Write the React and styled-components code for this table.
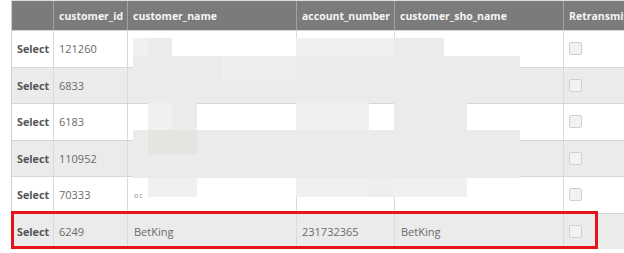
import React from "react";
import styled, { createGlobalStyle, css } from "styled-components";

const Global = createGlobalStyle`
  html, body { margin: 0; padding: 0; background: #fff; overflow: hidden; }
  body { font-family: "Open Sans", "Liberation Sans", sans-serif; }
`;

const Page = styled.div`
  position: relative;
  width: 624px;
  height: 253px;
  overflow: hidden;
`;

const Grid = styled.div`
  margin-left: 11px;
  width: 700px;
  border-top: 1px solid #dcdcdc;
  border-left: 1px solid #cfcfcf;
`;

const COLS = "42px 74px 169px 98px 169px 120px";

const HeadRow = styled.div`
  display: grid;
  grid-template-columns: ${COLS};
  height: 29px;
  background: #7b7b7b;
`;

const HeadCell = styled.div`
  box-sizing: border-box;
  border-right: 1px solid #a3a3a3;
  padding-left: 5px;
  display: flex;
  align-items: center;
  color: #f4f4f4;
  font-weight: 700;
  font-size: 10.5px;
  white-space: nowrap;
  overflow: hidden;
`;

const Row = styled.div`
  display: grid;
  grid-template-columns: ${COLS};
  height: 36.5px;
  box-sizing: border-box;
  border-top: 1px solid #d6d6d6;
  background: ${(p) => (p.$alt ? "#ebebeb" : "#ffffff")};
`;

const Cell = styled.div`
  box-sizing: border-box;
  border-right: 1px solid #dadada;
  padding-left: ${(p) => (p.$pad ? p.$pad : 5)}px;
  display: flex;
  align-items: center;
  color: #6a6a6a;
  font-size: 11px;
  white-space: nowrap;
  overflow: hidden;
  ${(p) =>
    p.$select &&
    css`
      color: #555;
      font-weight: 700;
      font-size: 10.8px;
    `}
`;

const Tiny = styled.span`
  font-size: 7px;
  color: #7f8c99;
  letter-spacing: 1px;
  margin-top: 2px;
`;

const Check = styled.span`
  width: 11px;
  height: 11px;
  border: 1px solid #d0d0d0;
  border-radius: 2px;
  background: #f2f2f2;
`;

const Mosaic = styled.div`
  position: absolute;
  inset: 0;
  pointer-events: none;
`;

const Block = styled.div`
  position: absolute;
  ${(p) =>
    p.$kind === "speckle"
      ? css`
          background-color: #f0f0f0;
          background-image: repeating-conic-gradient(#ececec 0 25%, #f4f4f4 0 50%);
          background-size: 2px 2px;
        `
      : p.$kind === "beige"
      ? css`
          background: #e6e4e1;
        `
      : p.$kind === "light"
      ? css`
          background: #eeeeee;
        `
      : css`
          background: #ebebeb;
        `}
`;

const Highlight = styled.div`
  position: absolute;
  left: 11px;
  top: 211px;
  width: 587px;
  height: 38px;
  box-sizing: border-box;
  border: 3px solid #e4141b;
  pointer-events: none;
`;

const rows = [
  { id: "121260" },
  { id: "6833" },
  { id: "6183" },
  { id: "110952" },
  { id: "70333", tiny: "oc" },
  { id: "6249", name: "BetKing", acc: "231732365", sho: "BetKing" },
];

const blocks = [
  [133, 38, 15, 18, "speckle"],
  [148, 38, 24, 18, "gray"],
  [296, 38, 73, 18, "speckle"],
  [369, 38, 25, 18, "speckle"],
  [394, 38, 50, 18, "gray"],
  [133, 56, 387, 24, "gray"],
  [222, 56, 74, 24, "light"],
  [138, 80, 382, 23, "gray"],
  [148, 103, 24, 27, "speckle"],
  [172, 103, 25, 27, "gray"],
  [296, 103, 73, 27, "speckle"],
  [394, 103, 73, 27, "gray"],
  [133, 130, 387, 48, "gray"],
  [148, 130, 49, 24, "beige"],
  [148, 178, 49, 19, "speckle"],
  [296, 178, 73, 19, "speckle"],
  [369, 178, 25, 19, "light"],
  [394, 178, 73, 19, "speckle"],
];

export default function App() {
  return (
    <Page>
      <Global />
      <Grid>
        <HeadRow>
          <HeadCell />
          <HeadCell>customer_id</HeadCell>
          <HeadCell>customer_name</HeadCell>
          <HeadCell>account_number</HeadCell>
          <HeadCell>customer_sho_name</HeadCell>
          <HeadCell>Retransmit</HeadCell>
        </HeadRow>
        {rows.map((r, i) => (
          <Row key={i} $alt={i % 2 === 1}>
            <Cell $select>Select</Cell>
            <Cell>{r.id}</Cell>
            <Cell $pad={6}>{r.tiny ? <Tiny>{r.tiny}</Tiny> : r.name}</Cell>
            <Cell>{r.acc}</Cell>
            <Cell $pad={6}>{r.sho}</Cell>
            <Cell $pad={5}>
              <Check />
            </Cell>
          </Row>
        ))}
      </Grid>
      <Mosaic>
        {blocks.map(([x, y, w, h, k], i) => (
          <Block
            key={i}
            $kind={k}
            style={{ left: x, top: y, width: w, height: h }}
          />
        ))}
      </Mosaic>
      <Highlight />
    </Page>
  );
}
